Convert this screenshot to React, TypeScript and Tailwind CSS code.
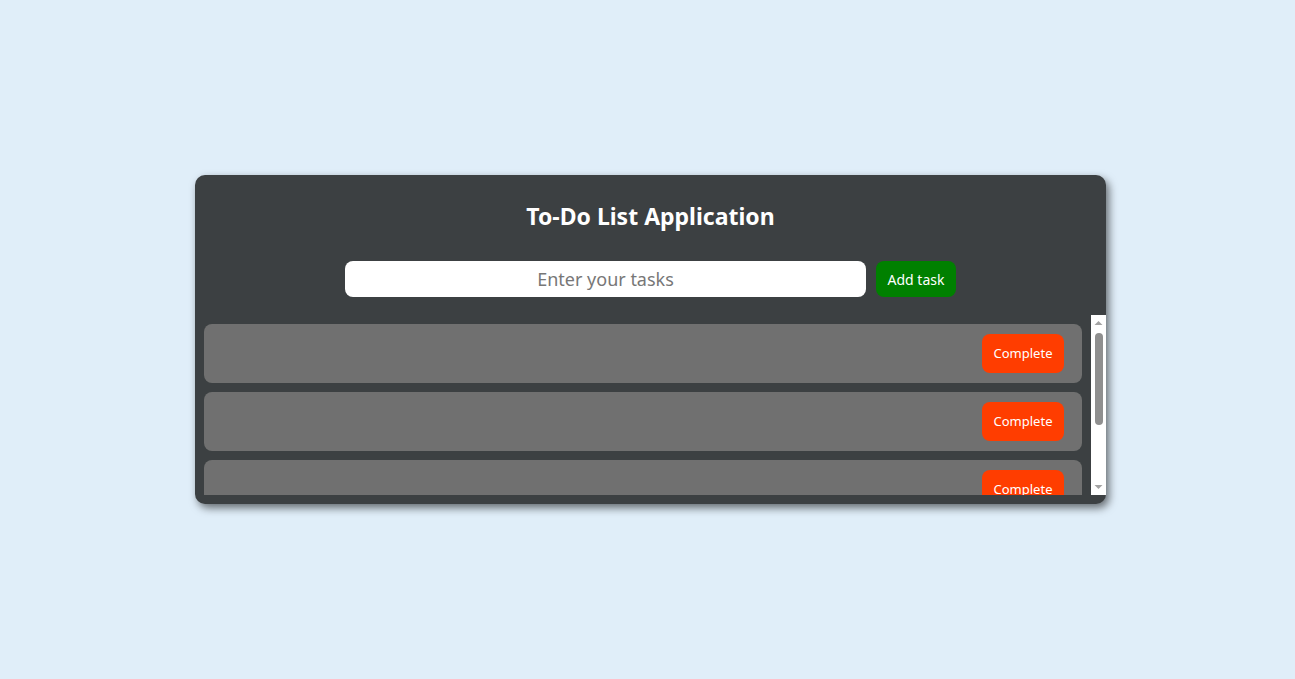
import React from "react";

function FakeScrollbar() {
  return (
    <div className="w-[15px] shrink-0 bg-white flex flex-col items-center">
      <svg width="15" height="15" viewBox="0 0 15 15" className="shrink-0">
        <polygon points="3.5,10 11.5,10 7.5,6" fill="#a3a3a3" />
      </svg>
      <div className="mt-[3px] w-[8px] h-[92px] rounded-full bg-[#8f8f8f]" />
      <div className="flex-1" />
      <svg width="15" height="15" viewBox="0 0 15 15" className="shrink-0">
        <polygon points="3.5,5 11.5,5 7.5,9" fill="#a3a3a3" />
      </svg>
    </div>
  );
}

export default function App() {
  const tasks = [1, 2, 3, 4, 5];
  return (
    <div
      className="min-h-screen w-full bg-[#e0eef9] flex items-center justify-center pl-[6px]"
      style={{ fontFamily: '"Noto Sans", Inter, sans-serif' }}
    >
      <div className="w-[911px] rounded-[10px] bg-[#3c4042] shadow-[3px_4px_8px_rgba(0,0,0,0.55)] pt-[25px] pb-[9px] flex flex-col">
        <h1 className="text-center text-white font-bold text-[23px] leading-[33px]">
          To-Do List Application
        </h1>
        <div className="mt-[28px] flex justify-center gap-[10px]">
          <input
            type="text"
            placeholder="Enter your tasks"
            className="w-[521px] h-[36px] rounded-[8px] bg-white text-center text-[18px] text-[#333] placeholder:text-[#777] outline-none"
          />
          <button className="w-[80px] h-[36px] rounded-[8px] bg-[#008000] text-white text-[14px]">
            Add task
          </button>
        </div>
        <div className="mt-[18px] h-[180px] flex">
          <div className="flex-1 overflow-hidden pl-[9px] pr-[9px] pt-[9px] flex flex-col gap-[9px]">
            {tasks.map((t) => (
              <div
                key={t}
                className="shrink-0 h-[59px] rounded-[8px] bg-[#707070] flex items-center justify-end pr-[18px]"
              >
                <button className="w-[82px] h-[39px] rounded-[8px] bg-[#ff3d00] text-white text-[13px] leading-none pb-[1px]">
                  Complete
                </button>
              </div>
            ))}
          </div>
          <FakeScrollbar />
        </div>
      </div>
    </div>
  );
}
